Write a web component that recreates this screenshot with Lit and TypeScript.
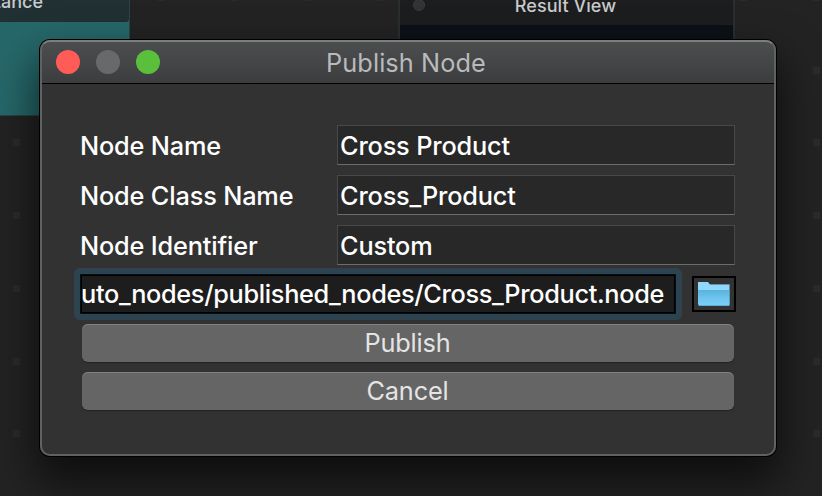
import { LitElement, html, css } from "lit";
import { customElement, property } from "lit/decorators.js";

@customElement("text-field")
class TextField extends LitElement {
  @property() label = "";
  @property() value = "";
  static styles = css`
    :host { display: grid; grid-template-columns: 257px 398px; height: 40px; line-height: 41px; }
    .label { white-space: nowrap; letter-spacing: -0.16px; }
    .input {
      box-sizing: border-box; height: 40px; background: #282828;
      border: 1px solid #484848; border-bottom-color: #6c6c6c;
      padding-left: 2px; line-height: 39px; white-space: nowrap; letter-spacing: -0.16px;
    }
  `;
  render() {
    return html`<span class="label">${this.label}</span><div class="input">${this.value}</div>`;
  }
}

@customElement("publish-dialog")
class PublishDialog extends LitElement {
  static styles = css`
    :host {
      display: flex; flex-direction: column; box-sizing: border-box; width: 736px; height: 416px;
      border-radius: 10px; background: #323232; position: relative;
      color: #fff; font: 500 25.3px Inter, "Liberation Sans", sans-serif;
      box-shadow: 0 0 0 1px #000, 0 22px 44px 4px rgba(0, 0, 0, 0.62);
    }
    .edge {
      position: absolute; inset: 0; border: 2px solid #606161; border-top-color: #7c7d7d;
      border-radius: 10px; pointer-events: none;
    }
    .title {
      height: 43px; border-bottom: 1px solid #000; border-radius: 10px 10px 0 0;
      background: linear-gradient(#4c4e50, #3b3d3e); display: grid;
      grid-template-columns: 1fr auto 1fr; align-items: center; color: #b9babb;
      font-weight: 400; letter-spacing: 0.1px;
    }
    .name { padding-top: 2px; margin-left: -4px; }
    .lights { display: flex; gap: 16px; padding-left: 16px; padding-top: 1px; }
    .light { width: 24px; height: 24px; border-radius: 50%; background: #68696b; }
    .close { background: #ff5c58; }
    .zoom { background: #5ac03b; }
    .form { padding: 41px 40px 0; display: flex; flex-direction: column; gap: 10px; }
    .path-row { display: flex; justify-content: space-between; align-items: center; padding: 9px 40px 0; width: 656px; }
    .path {
      box-sizing: border-box; width: 596px; height: 40px; border: 1px solid #031019;
      background: #1d1d1d; box-shadow: inset 0 0 0 1px #000;
      line-height: 38px; white-space: nowrap; letter-spacing: -0.32px;
    }
    .path-ring { width: 596px; padding: 6px; margin: -6px; border-radius: 6px; background: #2e4350; }
    .browse {
      box-sizing: border-box; width: 44px; height: 36px; border: 2px solid #000;
      display: flex; align-items: center; justify-content: center; background: #323232;
    }
    .browse svg { display: block; }
    .actions { display: flex; flex-direction: column; gap: 10px; padding: 10px 42px 0; }
    .button {
      height: 38px; border-radius: 6px; background: #656565; color: #e4e4e4; text-align: center;
      line-height: 38px; font-weight: 400; box-shadow: inset 0 1px #818181, 0 1px 1px #222;
      letter-spacing: -0.15px; text-indent: -1px;
    }
  `;
  render() {
    return html`
      <div class="title">
        <div class="lights">
          <span class="light close"></span><span class="light"></span><span class="light zoom"></span>
        </div>
        <span class="name">Publish Node</span>
      </div>
      <div class="form">
        <text-field label="Node Name" value="Cross Product"></text-field>
        <text-field label="Node Class Name" value="Cross_Product"></text-field>
        <text-field label="Node Identifier" value="Custom"></text-field>
      </div>
      <div class="path-row">
        <div class="path-ring"><div class="path">uto_nodes/published_nodes/Cross_Product.node</div></div>
        <div class="browse">
          <svg width="32" height="24" viewBox="0 0 32 24">
            <defs>
              <linearGradient id="front" x1="0" y1="0" x2="0" y2="1">
                <stop offset="0" stop-color="#58b3dc" />
                <stop offset="0.45" stop-color="#6cc3ec" />
                <stop offset="1" stop-color="#7bd0fa" />
              </linearGradient>
            </defs>
            <path d="M0 0H10L12 2.5H31.5V10H0Z" fill="#90d8fc" />
            <path d="M12 2.5H31.5" stroke="#5e93ab" />
            <path d="M0 8H32V22L31 24H1L0 22Z" fill="url(#front)" />
            <path d="M31.5 3V23" stroke="#4f8ba8" stroke-opacity=".7" />
            <path d="M1 23.5H31" stroke="#5fb0d4" />
          </svg>
        </div>
      </div>
      <div class="actions">
        <div class="button">Publish</div>
        <div class="button">Cancel</div>
      </div>
      <div class="edge"></div>
    `;
  }
}

@customElement("app-root")
class AppRoot extends LitElement {
  static styles = css`
    :host {
      display: block; position: relative; width: 822px; height: 496px; overflow: hidden;
      background: #232323; font-family: Inter, "Liberation Sans", sans-serif;
    }
    .dot { position: absolute; width: 7px; height: 7px; background: #2b2b2b; }
    .node { position: absolute; box-sizing: border-box; color: #c8cacb; font-size: 18px; font-weight: 500; white-space: nowrap; }
    .distance { left: -110px; top: -20px; width: 240px; height: 136px; background: #26686a; border: 1px solid #2c4345; }
    .distance .head { height: 41px; background: #213033; border-radius: 0 0 3px 3px; text-align: right; padding-right: 86px; line-height: 42px; }
    .result { left: 398px; top: -20px; width: 337px; height: 120px; background: #0c1118; border: 2px solid #292e30; }
    .result .head { height: 43px; background: #1c1d1f; text-align: center; line-height: 47px; letter-spacing: 0.05px; text-indent: -2px; }
    .port { position: absolute; left: 13px; top: 17px; width: 10px; height: 10px; border-radius: 50%; border: 1px solid #3c3d3d; background: #333; }
    .dialog { position: absolute; left: 40px; top: 40px; }
  `;
  render() {
    const step = 72.7;
    const dots = [];
    for (let r = 0; r < 7; r++)
      for (let c = 0; c < 12; c++)
        dots.push(html`<i class="dot" style="left:${Math.round(13 + c * step)}px;top:${Math.round(-6 + r * step)}px"></i>`);
    return html`
      ${dots}
      <div class="node distance"><div class="head">Distance</div></div>
      <div class="node result"><div class="head">Result View</div><i class="port"></i></div>
      <publish-dialog class="dialog"></publish-dialog>
    `;
  }
}
